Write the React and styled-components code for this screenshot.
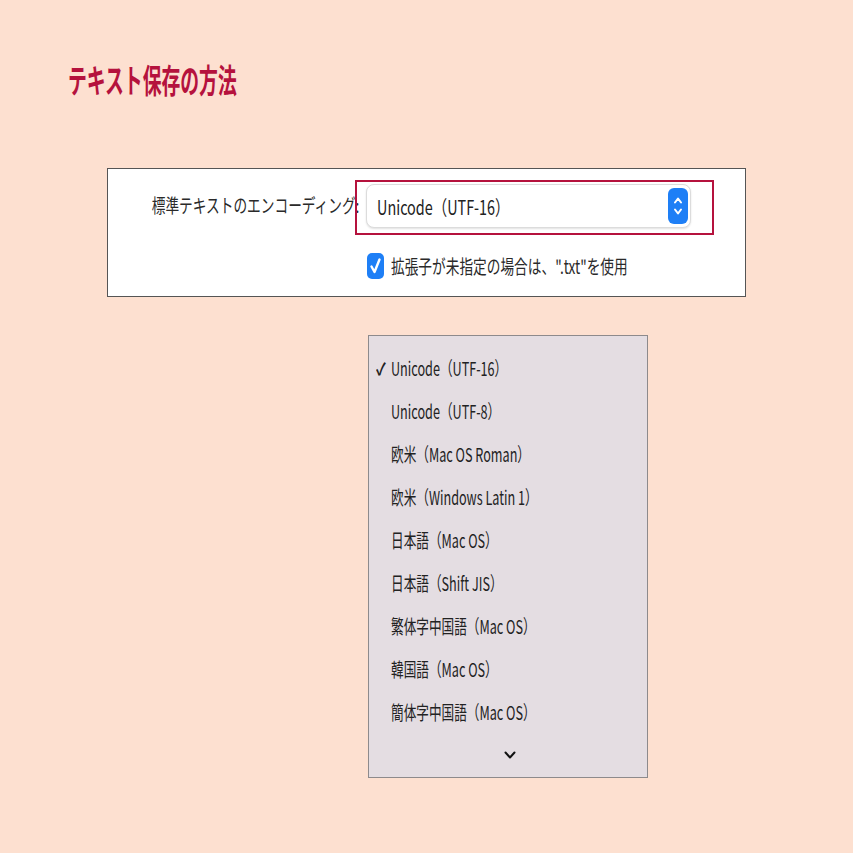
import React from "react";
import styled, { createGlobalStyle } from "styled-components";

const GlobalStyle = createGlobalStyle`
  html, body {
    margin: 0;
    padding: 0;
    background: #fde0d0;
  }
  body {
    font-family: "Noto Sans CJK JP", "Noto Sans", sans-serif;
    color: #222;
  }
`;

const Page = styled.div`
  width: 853px;
  height: 853px;
  padding-top: 57px;
  box-sizing: border-box;
  overflow: hidden;
`;

const Squish = styled.span`
  display: inline-block;
  white-space: nowrap;
  transform: scaleX(${(p) => p.$sx || 0.72});
  transform-origin: ${(p) => (p.$right ? "right" : "left")} center;
`;

const Title = styled.h1`
  margin: 0 0 0 68px;
  height: 44px;
  font-size: 33px;
  line-height: 44px;
  font-weight: 700;
  color: #b5123d;
`;

const Panel = styled.div`
  margin: 67px 0 0 107px;
  width: 637px;
  height: 116px;
  background: #fff;
  border: 1px solid #555;
  padding-top: 11px;
  box-sizing: content-box;
`;

const Row = styled.div`
  display: flex;
  align-items: center;
`;

const Label = styled.div`
  width: 251px;
  flex-shrink: 0;
  display: flex;
  justify-content: flex-end;
  font-size: 19px;
  color: #2a2a2a;
`;

const SelectWrap = styled.div`
  position: relative;
  margin-left: 7px;
  margin-top: 4px;
`;

const Select = styled.div`
  width: 325px;
  height: 44px;
  box-sizing: border-box;
  border: 1px solid #dcdcdc;
  border-radius: 8px;
  box-shadow: 0 1px 2px rgba(0, 0, 0, 0.12);
  background: #fff;
  display: flex;
  align-items: center;
  justify-content: space-between;
  padding: 0 2px 0 10px;
  font-size: 20px;
  color: #222;
`;

const Stepper = styled.div`
  width: 20px;
  height: 36px;
  border-radius: 6px;
  background: #1e7ff6;
  display: flex;
  align-items: center;
  justify-content: center;
`;

const Highlight = styled.div`
  position: absolute;
  left: -11px;
  top: -4px;
  width: 359px;
  height: 55px;
  box-sizing: border-box;
  border: 2px solid #b5123d;
  pointer-events: none;
`;

const CheckRow = styled.div`
  display: flex;
  align-items: center;
  margin: 24px 0 0 259px;
  gap: 7px;
`;

const Checkbox = styled.div`
  width: 17px;
  height: 26px;
  border-radius: 5px;
  background: #1e7ff6;
  display: flex;
  align-items: center;
  justify-content: center;
`;

const CheckText = styled.div`
  font-size: 19px;
  color: #2a2a2a;
`;

const Menu = styled.div`
  margin: 38px 0 0 368px;
  width: 278px;
  height: 431px;
  background: #e4dde2;
  border: 1px solid #8d8a8c;
  padding: 10px 0 0 0;
  box-sizing: content-box;
`;

const Item = styled.div`
  height: 43px;
  display: flex;
  align-items: center;
  font-size: 19px;
  color: #222;
`;

const Mark = styled.div`
  width: 22px;
  flex-shrink: 0;
  padding-left: 7px;
  box-sizing: border-box;
  font-size: 17px;
  font-weight: 700;
`;

const More = styled.div`
  height: 43px;
  display: flex;
  align-items: center;
  justify-content: center;
  padding-left: 4px;
`;

const items = [
  "Unicode（UTF-16）",
  "Unicode（UTF-8）",
  "欧米（Mac OS Roman）",
  "欧米（Windows Latin 1）",
  "日本語（Mac OS）",
  "日本語（Shift JIS）",
  "繁体字中国語（Mac OS）",
  "韓国語（Mac OS）",
  "簡体字中国語（Mac OS）",
];

export default function App() {
  return (
    <Page>
      <GlobalStyle />
      <Title>
        <Squish $sx={0.57}>テキスト保存の方法</Squish>
      </Title>

      <Panel>
        <Row>
          <Label>
            <Squish $right>標準テキストのエンコーディング:</Squish>
          </Label>
          <SelectWrap>
            <Select>
              <Squish>Unicode（UTF-16）</Squish>
              <Stepper>
                <svg width="12" height="26" viewBox="0 0 12 26" fill="none" stroke="#fff" strokeWidth="2" strokeLinecap="round" strokeLinejoin="round">
                  <path d="M3 9.5 L6 5.5 L9 9.5" />
                  <path d="M3 16.5 L6 20.5 L9 16.5" />
                </svg>
              </Stepper>
            </Select>
            <Highlight />
          </SelectWrap>
        </Row>
        <CheckRow>
          <Checkbox>
            <svg width="13" height="18" viewBox="0 0 13 18" fill="none" stroke="#fff" strokeWidth="2.4" strokeLinecap="round" strokeLinejoin="round">
              <path d="M2.5 9.5 L5.5 15 L10.5 2.5" />
            </svg>
          </Checkbox>
          <CheckText>
            <Squish>拡張子が未指定の場合は、".txt"を使用</Squish>
          </CheckText>
        </CheckRow>
      </Panel>

      <Menu>
        {items.map((t, i) => (
          <Item key={t}>
            <Mark>{i === 0 ? <Squish $sx={0.8}>✓</Squish> : null}</Mark>
            <Squish $sx={0.665}>{t}</Squish>
          </Item>
        ))}
        <More>
          <svg width="12" height="8" viewBox="0 0 12 8" fill="none" stroke="#111" strokeWidth="2" strokeLinecap="round" strokeLinejoin="round">
            <path d="M1.5 1.5 L6 6.5 L10.5 1.5" />
          </svg>
        </More>
      </Menu>
    </Page>
  );
}
